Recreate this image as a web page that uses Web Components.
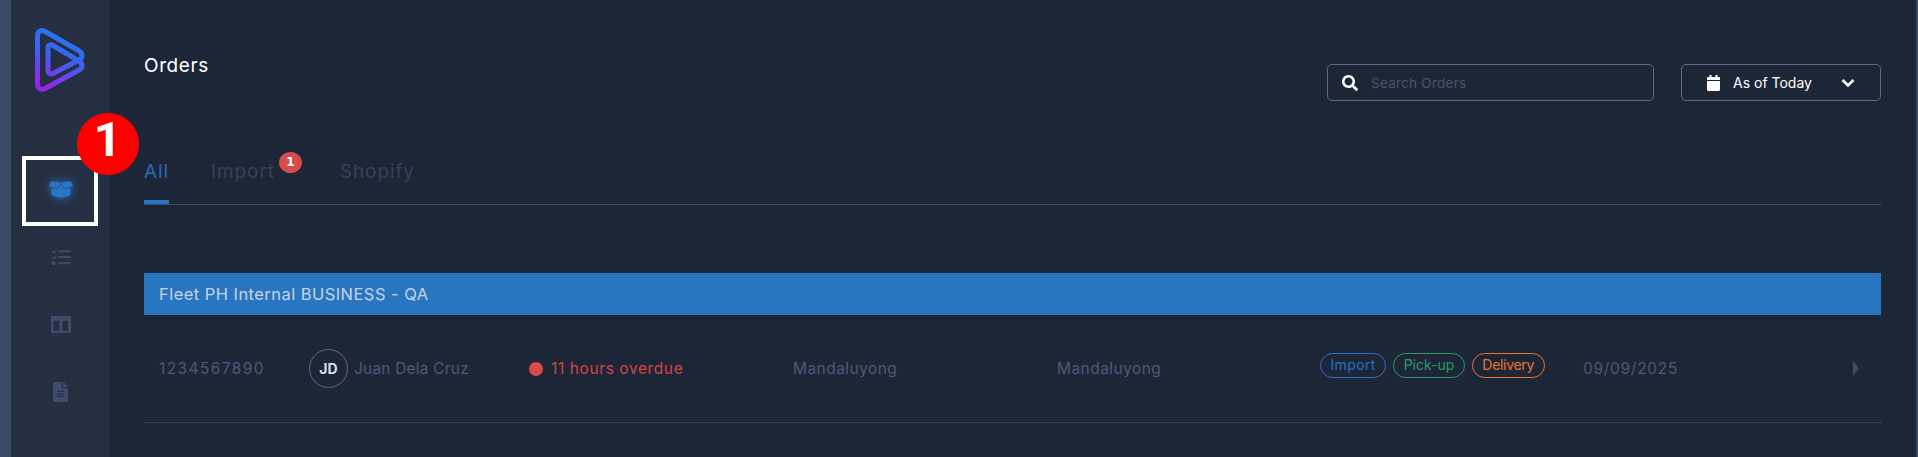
<!DOCTYPE html>
<html>
<head>
<meta charset="utf-8">
<title>Orders</title>
<style>
    html, body { margin: 0; height: 100%; background: #1d2637; overflow: hidden; }
    body { font-family: Inter, "Open Sans", sans-serif; }
</style>
</head>
<body>
<app-shell>
    <side-bar>
        <nav-icon slot="nav" active>
            <svg viewBox="0 0 640 512" width="24" height="19"><path fill="currentColor" d="M425.7 256c-16.9 0-32.8-9-41.4-23.4L320 126l-64.2 106.6c-8.7 14.5-24.6 23.5-41.5 23.5-4.5 0-9-.6-13.3-1.9L64 215v178c0 14.7 10 27.5 24.2 31l216.2 54.1c10.2 2.5 20.9 2.5 31 0L551.8 424c14.2-3.6 24.2-16.4 24.2-31V215l-137 39.1c-4.3 1.3-8.8 1.9-13.3 1.9zm212.6-112.2L586.8 41c-3.1-6.2-9.8-9.8-16.7-8.9L320 64l91.7 152.1c3.8 6.3 11.4 9.3 18.5 7.3l197.9-56.5c9.9-2.9 14.7-13.9 10.2-23.1zM53.2 41L1.7 143.8c-4.6 9.2.3 20.2 10.1 23l197.9 56.5c7.1 2 14.7-1 18.5-7.3L320 64 69.8 32.1c-6.9-.8-13.5 2.7-16.6 8.9z"/></svg>
        </nav-icon>
        <nav-icon slot="nav">
            <svg viewBox="0 0 20 17" width="20" height="17"><g fill="none" stroke="currentColor" stroke-width="1.5"><path d="M1 2.200l1.600 1.600L5.600.800M1 8.200l1.600 1.600 3-3"/></g><circle cx="2.600" cy="14.300" r="2" fill="currentColor"/><path fill="currentColor" d="M7.400 1.200H19.600V3.200H7.400zM7.400 7.100H19.600V9.100H7.400zM7.400 13.200H19.600V15.200H7.400z"/></svg>
        </nav-icon>
        <nav-icon slot="nav">
            <svg viewBox="0 0 20 17" width="20" height="17"><path fill="currentColor" fill-rule="evenodd" d="M1 0H19a1 1 0 0 1 1 1V16a1 1 0 0 1-1 1H1a1 1 0 0 1-1-1V1a1 1 0 0 1 1-1zM2.400 4.700V14.800H8.400V4.700zM11.200 4.700V14.800H17.200V4.700z"/></svg>
        </nav-icon>
        <nav-icon slot="nav">
            <svg viewBox="0 0 384 512" width="15" height="20"><path fill="currentColor" d="M224 136V0H24C10.700 0 0 10.700 0 24v464c0 13.300 10.700 24 24 24h336c13.300 0 24-10.700 24-24V160H248c-13.200 0-24-10.800-24-24zm64 236c0 6.600-5.400 12-12 12H108c-6.600 0-12-5.400-12-12v-8c0-6.600 5.400-12 12-12h168c6.600 0 12 5.400 12 12v8zm0-64c0 6.600-5.400 12-12 12H108c-6.600 0-12-5.400-12-12v-8c0-6.600 5.400-12 12-12h168c6.600 0 12 5.400 12 12v8zm0-72v8c0 6.600-5.400 12-12 12H108c-6.600 0-12-5.400-12-12v-8c0-6.600 5.400-12 12-12h168c6.600 0 12 5.400 12 12zm96-114.100v6.100H256V0h6.100c6.400 0 12.500 2.500 17 7l97.900 98c4.500 4.500 7 10.600 7 16.900z"/></svg>
        </nav-icon>
    </side-bar>
    <orders-page>
        <page-head title-text="Orders">
            <search-box placeholder="Search Orders"></search-box>
            <date-filter>As of Today</date-filter>
        </page-head>
        <tab-bar>
            <tab-item active>All</tab-item>
            <tab-item badge="1">Import</tab-item>
            <tab-item>Shopify</tab-item>
        </tab-bar>
        <group-banner>Fleet PH Internal BUSINESS - QA</group-banner>
        <order-row>
            <span slot="number">1234567890</span>
            <span slot="initials">JD</span>
            <span slot="name">Juan Dela Cruz</span>
            <span slot="status">11 hours overdue</span>
            <span slot="origin">Mandaluyong</span>
            <span slot="destination">Mandaluyong</span>
            <status-tag slot="tags" tone="blue">Import</status-tag>
            <status-tag slot="tags" tone="green">Pick-up</status-tag>
            <status-tag slot="tags" tone="orange">Delivery</status-tag>
            <span slot="date">09/09/2025</span>
        </order-row>
    </orders-page>
</app-shell>
<step-marker>1</step-marker>

<script>
class AppShell extends HTMLElement {
    constructor() {
        super();
        this.attachShadow({mode: "open"}).innerHTML = `
        <style>
            :host { display: flex; height: 457px; border-left: 11px solid #3a4966; border-right: 2px solid #3a4966; box-sizing: border-box; }
        </style>
        <slot></slot>`;
    }
}

class SideBar extends HTMLElement {
    constructor() {
        super();
        this.attachShadow({mode: "open"}).innerHTML = `
        <style>
            :host { display: flex; flex-direction: column; align-items: center; flex: 0 0 99px; background: #252f42; box-sizing: border-box; padding-top: 28px; }
            svg { display: block; width: 50px; height: 64px; margin-right: 1px; }
            nav { display: flex; flex-direction: column; align-items: center; gap: 41.500px; margin-top: 84.500px; }
        </style>
        <svg viewBox="36 28 50 64">
            <defs>
                <linearGradient id="logo" x1=".65" y1="0" x2=".35" y2="1">
                    <stop offset="0" stop-color="#2279f2"/>
                    <stop offset=".5" stop-color="#3f5ff0"/>
                    <stop offset="1" stop-color="#9626e6"/>
                </linearGradient>
            </defs>
            <path fill="none" stroke="url(#logo)" stroke-width="5" stroke-linejoin="round"
                d="M38.500 36C38.500 31 42 29.500 46 31.500L79.500 50.500C84 53 84 58 80 60L54 73.500C51 75 49 73 49 70L49 48C49 45 51.500 44 54 45.500L80 61C84 63.500 84 68 80 70L46 88.500C42 90.500 38.500 88.500 38.500 84Z"/>
        </svg>
        <nav><slot name="nav"></slot></nav>`;
    }
}

class NavIcon extends HTMLElement {
    constructor() {
        super();
        this.attachShadow({mode: "open"}).innerHTML = `
        <style>
            :host { display: flex; align-items: center; justify-content: center; width: 26px; height: 26px; color: #3e4c6d; }
            :host([active]) { color: #2a75c8; filter: drop-shadow(0 0 5px #2a75c8); }
            ::slotted(svg) { display: block; }
        </style>
        <slot></slot>`;
    }
}

class OrdersPage extends HTMLElement {
    constructor() {
        super();
        this.attachShadow({mode: "open"}).innerHTML = `
        <style>
            :host { display: block; flex: 1; min-width: 0; padding: 0 35px 0 34px; }
        </style>
        <slot></slot>`;
    }
}

class PageHead extends HTMLElement {
    constructor() {
        super();
        this.attachShadow({mode: "open"}).innerHTML = `
        <style>
            :host { display: flex; justify-content: space-between; align-items: flex-start; height: 100px; padding-top: 52px; box-sizing: border-box; }
            h1 { margin: 1px 0 0; font: 400 19px/26px Inter, sans-serif; color: #fff; letter-spacing: .6px; }
            div { display: flex; gap: 27px; margin-top: 12px; }
        </style>
        <h1></h1>
        <div><slot></slot></div>`;
    }
    connectedCallback() {
        this.shadowRoot.querySelector("h1").textContent = this.getAttribute("title-text");
    }
}

class SearchBox extends HTMLElement {
    constructor() {
        super();
        this.attachShadow({mode: "open"}).innerHTML = `
        <style>
            :host { display: flex; align-items: center; width: 327px; height: 37px; box-sizing: border-box; border: 1px solid #5c6a84; border-radius: 5px; padding-left: 14px; gap: 13px; }
            svg { width: 16px; height: 16px; color: #fff; flex: none; }
            span { font: 400 13.500px Inter, sans-serif; color: #46536e; letter-spacing: .25px; }
        </style>
        <svg viewBox="0 0 512 512"><path fill="currentColor" d="M505 442.700L405.300 343c-4.500-4.500-10.600-7-17-7H372c27.600-35.300 44-79.700 44-128C416 93.100 322.900 0 208 0S0 93.100 0 208s93.100 208 208 208c48.300 0 92.700-16.400 128-44v16.300c0 6.400 2.500 12.500 7 17l99.700 99.700c9.400 9.400 24.600 9.400 33.900 0l28.300-28.300c9.400-9.400 9.400-24.600.1-34zM208 336c-70.700 0-128-57.200-128-128 0-70.700 57.200-128 128-128 70.700 0 128 57.200 128 128 0 70.700-57.200 128-128 128z"/></svg>
        <span></span>`;
    }
    connectedCallback() {
        this.shadowRoot.querySelector("span").textContent = this.getAttribute("placeholder");
    }
}

class DateFilter extends HTMLElement {
    constructor() {
        super();
        this.attachShadow({mode: "open"}).innerHTML = `
        <style>
            :host { display: flex; align-items: center; width: 200px; height: 37px; box-sizing: border-box; border: 1px solid #5c6a84; border-radius: 5px; padding-left: 25px; color: #fff; font: 400 14px Inter, sans-serif; }
            .cal { width: 13px; height: 16px; margin-right: 13px; }
            .chev { width: 14px; height: 10px; margin-left: auto; margin-right: 25px; }
        </style>
        <svg class="cal" viewBox="0 0 13 16"><path fill="currentColor" d="M2.500 0h2v2h4V0h2v2H12a1 1 0 0 1 1 1v2H0V3a1 1 0 0 1 1-1h1.500zM0 6h13v8.500a1.500 1.500 0 0 1-1.500 1.500h-10A1.500 1.500 0 0 1 0 14.500z"/></svg>
        <slot></slot>
        <svg class="chev" viewBox="0 0 14 10"><path fill="none" stroke="currentColor" stroke-width="2.600" d="M1.500 2L7 7.500 12.500 2"/></svg>`;
    }
}

class TabBar extends HTMLElement {
    constructor() {
        super();
        this.attachShadow({mode: "open"}).innerHTML = `
        <style>
            :host { display: flex; gap: 42px; height: 105px; box-sizing: border-box; padding-top: 55px; border-bottom: 1px solid #3b4b6b; }
        </style>
        <slot></slot>`;
    }
}

class TabItem extends HTMLElement {
    constructor() {
        super();
        this.attachShadow({mode: "open"}).innerHTML = `
        <style>
            :host { display: block; position: relative; color: #35425f; font: 400 19px/33px Inter, sans-serif; letter-spacing: .9px; height: 49px; box-sizing: border-box; }
            :host([active]) { color: #2a69b8; border-bottom: 4px solid #2a75c0; }
            :host([badge]) { margin-right: 23px; }
            b { position: absolute; top: -3px; left: 100%; margin-left: 4px; width: 23px; height: 21px; border-radius: 50%; background: #d64c4c; color: #fff; font: 700 12px/21px "DejaVu Sans", sans-serif; text-align: center; letter-spacing: 0; }
        </style>
        <slot></slot>`;
    }
    connectedCallback() {
        const badge = this.getAttribute("badge");
        if (badge) {
            const b = document.createElement("b");
            b.textContent = badge;
            this.shadowRoot.appendChild(b);
        }
    }
}

class GroupBanner extends HTMLElement {
    constructor() {
        super();
        this.attachShadow({mode: "open"}).innerHTML = `
        <style>
            :host { display: flex; align-items: center; height: 42px; margin-top: 68px; padding-left: 15px; background: #2a75c0; color: #c3d4e8; font: 400 16.500px Inter, sans-serif; letter-spacing: .45px; }
        </style>
        <slot></slot>`;
    }
}

class OrderRow extends HTMLElement {
    constructor() {
        super();
        this.attachShadow({mode: "open"}).innerHTML = `
        <style>
            :host { display: grid; grid-template-columns: 150px 220px 264px 264px 263px 263px 1fr; align-items: center; height: 108px; box-sizing: border-box; padding: 0 22px 0 15px; border-bottom: 1px dotted #43536f; color: #4b5a78; font: 400 15.500px Inter, sans-serif; }
            .num { letter-spacing: 1.400px; }
            .who { display: flex; align-items: center; gap: 6px; letter-spacing: .2px; }
            .avatar { display: flex; align-items: center; justify-content: center; width: 39px; height: 39px; box-sizing: border-box; border: 1px solid #5c6a84; border-radius: 50%; color: #d6dde8; font: 700 14px Inter, sans-serif; letter-spacing: 0; }
            .status { display: flex; align-items: center; gap: 8px; color: #d2444a; letter-spacing: .6px; }
            .status i { width: 14px; height: 14px; border-radius: 50%; background: #d64c4c; }
            .city { letter-spacing: .45px; }
            .tags { display: flex; gap: 7px; margin-top: -6px; }
            .end { display: flex; justify-content: space-between; align-items: center; letter-spacing: .7px; }
            .caret { width: 6px; height: 15px; }
        </style>
        <div class="num"><slot name="number"></slot></div>
        <div class="who"><span class="avatar"><slot name="initials"></slot></span><slot name="name"></slot></div>
        <div class="status"><i></i><slot name="status"></slot></div>
        <div class="city"><slot name="origin"></slot></div>
        <div class="city"><slot name="destination"></slot></div>
        <div class="tags"><slot name="tags"></slot></div>
        <div class="end">
            <slot name="date"></slot>
            <svg class="caret" viewBox="0 0 6 15"><path fill="#3e4c6d" d="M0 0L6 7.500 0 15z"/></svg>
        </div>`;
    }
}

class StatusTag extends HTMLElement {
    constructor() {
        super();
        this.attachShadow({mode: "open"}).innerHTML = `
        <style>
            :host { display: block; height: 25px; box-sizing: border-box; padding: 0 9.500px; border: 1px solid currentColor; border-radius: 13px; font: 400 14px/22px Inter, sans-serif; }
            :host([tone="blue"]) { color: #2a6fc9; letter-spacing: .35px; }
            :host([tone="green"]) { color: #2c9a68; letter-spacing: 0; }
            :host([tone="orange"]) { color: #e8742e; letter-spacing: -.3px; }
        </style>
        <slot></slot>`;
    }
}

// review annotation drawn over the sidebar, not part of the app itself
class StepMarker extends HTMLElement {
    constructor() {
        super();
        this.attachShadow({mode: "open"}).innerHTML = `
        <style>
            :host { display: block; position: absolute; left: 22px; top: 156px; width: 76px; height: 70px; box-sizing: border-box; border: 4px solid #fff; }
            span { position: absolute; left: 50.500px; top: -47.500px; width: 62px; height: 62px; border-radius: 50%; background: #f00; color: #fff; font: 700 49px/54px Roboto, sans-serif; text-align: center; }
        </style>
        <span><slot></slot></span>`;
    }
}

customElements.define("app-shell", AppShell);
customElements.define("side-bar", SideBar);
customElements.define("nav-icon", NavIcon);
customElements.define("orders-page", OrdersPage);
customElements.define("page-head", PageHead);
customElements.define("search-box", SearchBox);
customElements.define("date-filter", DateFilter);
customElements.define("tab-bar", TabBar);
customElements.define("tab-item", TabItem);
customElements.define("group-banner", GroupBanner);
customElements.define("order-row", OrderRow);
customElements.define("status-tag", StatusTag);
customElements.define("step-marker", StepMarker);
</script>
</body>
</html>
